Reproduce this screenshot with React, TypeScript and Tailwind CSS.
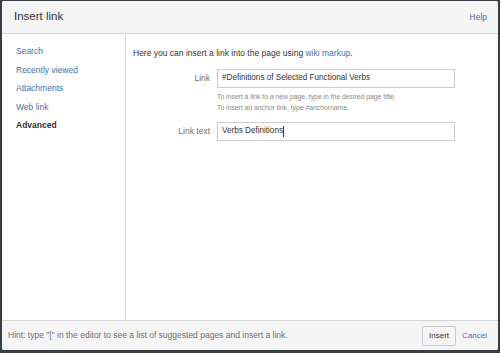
const navItems = ["Search", "Recently viewed", "Attachments", "Web link"];

export default function App() {
  return (
    <div
      className="h-[353px] w-[500px] bg-[#3a3d42] pl-[2px] pr-[2px] pt-[1px] pb-[3px]"
      style={{ fontFamily: '"Liberation Sans", Arial, sans-serif' }}
    >
      <div className="flex h-full flex-col overflow-hidden rounded-[2px] bg-white">
        <div className="flex h-[33px] shrink-0 items-center justify-between border-b border-[#d5d5d5] bg-[#f5f5f5] pl-[12px] pr-[11px]">
          <h1 className="text-[11.5px] font-normal text-[#333]">Insert link</h1>
          <a className="text-[8.5px] text-[#3b73af]">Help</a>
        </div>

        <div className="flex min-h-0 flex-1">
          <nav className="flex w-[124px] shrink-0 flex-col gap-[6.5px] border-r border-[#dcdcdc] pl-[14px] pt-[11px]">
            {navItems.map((item) => (
              <a key={item} className="text-[8.5px] leading-[12px] text-[#3b73af]">
                {item}
              </a>
            ))}
            <span className="text-[8.5px] font-bold leading-[12px] text-[#333]">Advanced</span>
          </nav>

          <main className="flex-1 pl-[7px] pt-[13px]">
            <p className="text-[8.5px] leading-[12px] text-[#333]">
              Here you can insert a link into the page using{" "}
              <a className="text-[#3b73af]">wiki markup</a>.
            </p>

            <div className="mt-[10px] grid grid-cols-[77px_238px] items-center gap-x-[7px]">
              <label className="text-right text-[8.5px] text-[#707070]">Link</label>
              <div className="flex h-[19px] items-center border border-[#cccccc] px-[4px] text-[8.15px] text-[#333]">
                #Definitions of Selected Functional Verbs
              </div>
              <div />
              <div className="pt-[3px] pb-[9px] text-[6.8px] leading-[11px] text-[#8a8a8a]">
                <div>To insert a link to a new page, type in the desired page title.</div>
                <div>To insert an anchor link, type #anchorname.</div>
              </div>
              <label className="text-right text-[8.5px] text-[#707070]">Link text</label>
              <div className="flex h-[19px] items-center border border-[#cccccc] px-[4px] text-[8.15px] text-[#333]">
                Verbs Definitions
                <span className="ml-[0.5px] h-[11px] w-px bg-[#333]" />
              </div>
            </div>
          </main>
        </div>

        <div className="flex h-[30px] shrink-0 items-center justify-between border-t border-[#d5d5d5] bg-[#f5f5f5] pl-[6px] pr-[11px]">
          <span className="text-[8.5px] text-[#707070]">
            Hint: type "[" in the editor to see a list of suggested pages and insert a link.
          </span>
          <div className="flex items-center gap-[6px]">
            <button className="h-[20px] rounded-[2px] border border-[#cccccc] bg-[#f5f5f5] px-[6px] text-[8px] text-[#333]">
              Insert
            </button>
            <a className="text-[8px] text-[#3b73af]">Cancel</a>
          </div>
        </div>
      </div>
    </div>
  );
}
